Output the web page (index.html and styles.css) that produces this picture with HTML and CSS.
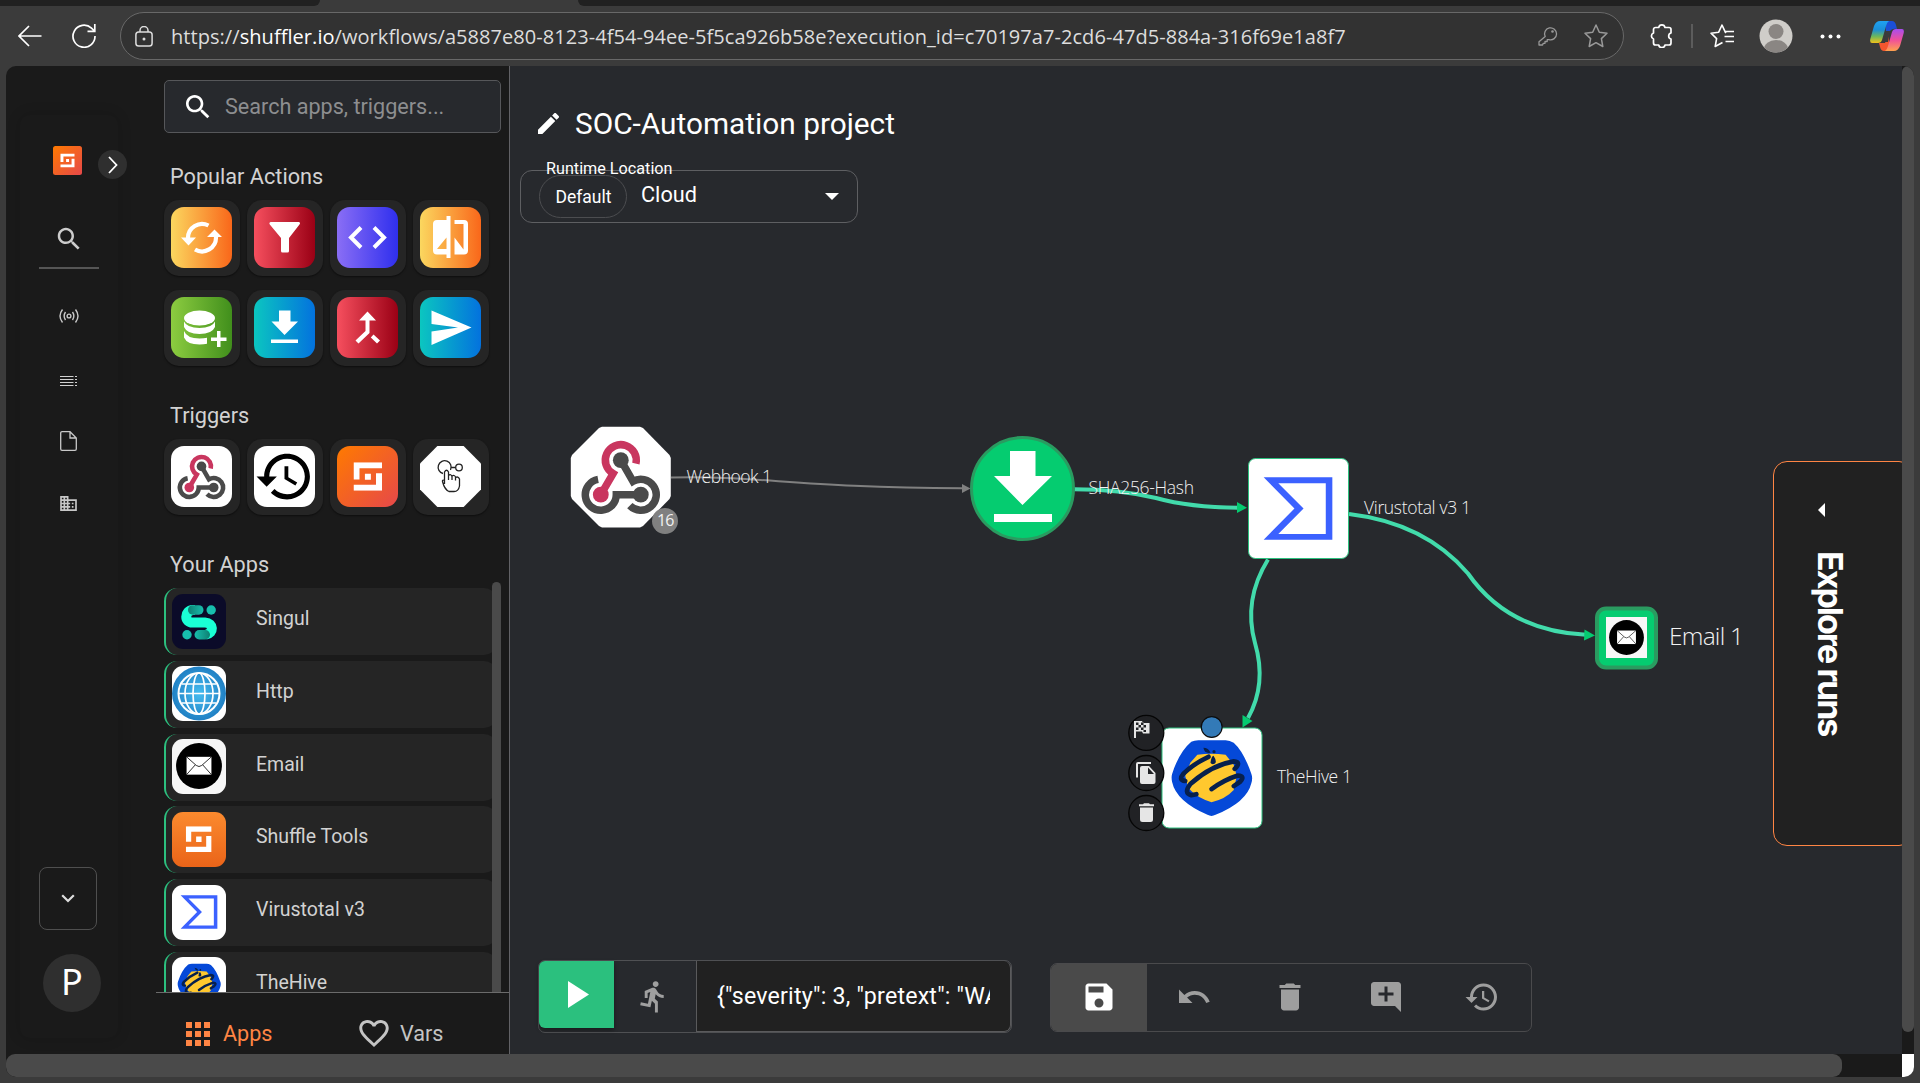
FILE: index.html
```html
<!DOCTYPE html>
<html lang="en">
<head>
<meta charset="utf-8">
<title>Shuffle - SOC-Automation project</title>
<link rel="stylesheet" href="styles.css">
</head>
<body>
<svg class="defs" width="0" height="0" aria-hidden="true">
  <defs>
    <linearGradient id="g-brand" x1="0" y1="0" x2="1" y2="1"><stop offset="0" stop-color="#ff7a00"/><stop offset="1" stop-color="#e6484a"/></linearGradient>
    <linearGradient id="g-tools" x1="0" y1="0" x2="0" y2="1"><stop offset="0" stop-color="#fb8a2e"/><stop offset="1" stop-color="#ea6419"/></linearGradient>
    <radialGradient id="g-http"><stop offset="0" stop-color="#46bdf0"/><stop offset="1" stop-color="#2080c4"/></radialGradient>
    <linearGradient id="g-sing1" x1="0" y1="0" x2="1" y2="0"><stop offset="0" stop-color="#0f7f72"/><stop offset="1" stop-color="#17bfae"/></linearGradient>
    <linearGradient id="g-sing2" x1="0" y1="0" x2="1" y2="0"><stop offset="0" stop-color="#17bfae"/><stop offset="1" stop-color="#0f7f72"/></linearGradient>
    <linearGradient id="g-cop1" x1="0" y1="0" x2="0" y2="1"><stop offset="0" stop-color="#1fa2f2"/><stop offset=".4" stop-color="#1b8fd8"/><stop offset=".7" stop-color="#6cb75c"/><stop offset="1" stop-color="#f2c21a"/></linearGradient>
    <linearGradient id="g-cop2" x1="0" y1="0" x2="0" y2="1"><stop offset="0" stop-color="#a84df0"/><stop offset=".5" stop-color="#f0509a"/><stop offset="1" stop-color="#ffa24d"/></linearGradient>
    <symbol id="shuffle" viewBox="0 0 10 10"><path d="M0 0H10V2.1H2.1V6H0ZM7.9 3.8H10V10H0V7.9H7.9ZM4 4H6.1V6.1H4Z" fill="#fff"/></symbol>
    <symbol id="webhook" viewBox="0 0 100 100">
      <g fill="none" stroke-width="7.5">
        <path d="M65.1 37A15.5 15.5 0 1 0 42.3 46.9L30 68" stroke="#c9365f"/>
        <path d="M27.3 52.7A15.5 15.5 0 1 0 45.5 68H70M59 79A15.5 15.5 0 1 0 62.2 54.6L50 33.5" stroke="#4a4a4a"/>
      </g>
      <circle cx="50" cy="33.5" r="7.9" fill="#4a4a4a"/><circle cx="70" cy="68" r="7.9" fill="#4a4a4a"/><circle cx="30" cy="68" r="7.9" fill="#c9365f"/>
    </symbol>
    <symbol id="hive" viewBox="0 0 100 100">
      <path d="M30 14Q33 12.500 37 12.500H64Q68 12.500 72 15Q82 24 89.500 46Q91 50 89.500 55Q85 74 54 86.500Q50 88.500 46 86.500Q15 73 11 54Q10 49 11 46Q18 24 30 14Z" fill="#0549d8"/>
      <path d="M36 27Q50 25 64 27L72 37L75 48L72 62Q64 71 50 74Q36 70 27 60L24 48L29 35Z" fill="#ffc82e"/>
      <g fill="none" stroke="#07204d" stroke-width="4.600" stroke-linecap="round" stroke-linejoin="round">
        <path d="M47 29Q32 36 22 46Q17 52 24 53"/>
        <path d="M73 41Q80 34 72 33.500Q50 37 29 56Q22 65 30 67L35 66"/>
        <path d="M50 61Q62 52 76 47.500Q84 48 78 54L72 58"/>
      </g>
      <path d="M42 20Q47 20 49 25Q43 26 42 20ZM49 35Q50 28 52 28Q56 34 53 36Q50 37 49 35Z" fill="#07204d"/><circle cx="52.500" cy="24" r="1.600" fill="#07204d"/>
    </symbol>
    <symbol id="envelope" viewBox="0 0 100 100">
      <circle cx="50" cy="50" r="42.500" fill="#000"/><rect x="27" y="33" width="46" height="33" fill="#fff"/>
      <path d="M27 33L45 49Q50 53 55 49L73 33M27 66L43 48M73 66L57 48" fill="none" stroke="#000" stroke-width="1.500"/>
    </symbol>
    <symbol id="vt" viewBox="0 0 100 100"><path fill-rule="evenodd" fill="#3b61ff" d="M16 19H84V81H16L46.500 50ZM30.500 25L55.500 50L30.500 75.200H77.500V25Z"/></symbol>
    <symbol id="search" viewBox="0 0 24 24"><path fill="currentColor" d="M15.500 14h-.79l-.28-.27C15.410 12.590 16 11.110 16 9.500 16 5.910 13.090 3 9.500 3S3 5.910 3 9.500 5.910 16 9.500 16c1.610 0 3.090-.59 4.230-1.570l.27.28v.79l5 4.990L20.490 19l-4.990-5zm-6 0C7.010 14 5 11.990 5 9.500S7.010 5 9.500 5 14 7.010 14 9.500 11.990 14 9.500 14z"/></symbol>
    <symbol id="history" viewBox="0 0 24 24"><path fill="currentColor" d="M13 3c-4.970 0-9 4.030-9 9H1l3.890 3.890.07.14L9 12H6c0-3.870 3.130-7 7-7s7 3.130 7 7-3.130 7-7 7c-1.930 0-3.680-.79-4.940-2.060l-1.420 1.420C8.270 19.990 10.510 21 13 21c4.970 0 9-4.030 9-9s-4.030-9-9-9zm-1 5v5l4.280 2.540.72-1.210-3.500-2.080V8H12z"/></symbol>
    <symbol id="trash" viewBox="0 0 24 24"><path fill="currentColor" d="M6 19c0 1.100.9 2 2 2h8c1.100 0 2-.9 2-2V7H6v12zM19 4h-3.500l-1-1h-5l-1 1H5v2h14V4z"/></symbol>
  </defs>
</svg>

<header class="browser">
  <div class="tabstrip"><span class="tab tab--left"></span><span class="tab tab--right"></span></div>
  <div class="toolbar">
    <svg class="nav-back" viewBox="0 0 24 22"><path d="M23.500 11H1M11 1L1 11L11 21" fill="none" stroke="#fff" stroke-width="1.700"/></svg>
    <svg class="nav-reload" viewBox="0 0 24 24"><path d="M23 12A11 11 0 1 1 19.500 4.200L22.500 7M22.800 0V7.300H15.500" fill="none" stroke="#fff" stroke-width="1.700"/></svg>
    <div class="address">
      <svg class="lock" viewBox="0 0 18 21"><rect x=".9" y="6" width="16.200" height="14" rx="2.800" fill="none" stroke="#ddd" stroke-width="1.500"/><path d="M5 6V4.500a4 4 0 0 1 8 0V6" fill="none" stroke="#ddd" stroke-width="1.500"/><circle cx="9" cy="13" r="1.500" fill="#ddd"/></svg>
      <span class="url">https://<b>shuffler.io</b>/workflows/a5887e80-8123-4f54-94ee-5f5ca926b58e?execution_id=c70197a7-2cd6-47d5-884a-316f69e1a8f7</span>
      <svg class="key" viewBox="0 0 20 20"><path d="M7.200 10.500A6 6 0 1 1 11 13.600L9.200 13.700V15.500H7V17.300H5.200L4.600 19H1V15.700Z" fill="none" stroke="#999" stroke-width="1.300" stroke-linejoin="round"/><circle cx="14.500" cy="5.500" r="1.300" fill="#999"/></svg>
      <svg class="star" viewBox="0 0 24 24"><path d="M12 1L15.300 8.200L23 9.200L17.400 14.600L18.800 22.500L12 18.700L5.200 22.500L6.600 14.600L1 9.200L8.700 8.200Z" fill="none" stroke="#999" stroke-width="1.500" stroke-linejoin="round"/></svg>
    </div>
    <svg class="puzzle" viewBox="0 0 22 24"><path d="M3.500 5.500A2 2 0 0 1 5.500 3.500H8.700A3.200 3.200 0 0 1 15 3.500H19A2 2 0 0 1 21 5.500V9A3.100 3.100 0 0 0 21 15V19A2 2 0 0 1 19 21H15A3.200 3.200 0 0 1 8.700 21H5.500A2 2 0 0 1 3.500 19V15A3.200 3.200 0 0 1 3.500 9Z" fill="none" stroke="#fff" stroke-width="1.700" stroke-linejoin="round"/></svg>
    <span class="sep"></span>
    <svg class="favs" viewBox="0 0 24 24"><path d="M16 9L15.300 8.200L12 1L8.700 8.200L1 9.200L6.600 14.600L5.200 22.500L12.500 18.500M15.500 7.500H24M14.500 12.500H24M15.500 17.500H24" fill="none" stroke="#fff" stroke-width="1.600" stroke-linejoin="round"/></svg>
    <svg class="person" viewBox="0 0 34 34"><clipPath id="pc"><circle cx="17" cy="17" r="16.500"/></clipPath><g clip-path="url(#pc)"><rect width="34" height="34" fill="#cfcdc9"/><circle cx="17" cy="12.500" r="7.500" fill="#8a8683"/><ellipse cx="17" cy="30" rx="12" ry="9" fill="#8a8683"/></g></svg>
    <svg class="dots" viewBox="0 0 21 5"><g fill="#fff"><circle cx="2.500" cy="2.500" r="2"/><circle cx="10.500" cy="2.500" r="2"/><circle cx="18.500" cy="2.500" r="2"/></g></svg>
    <svg class="copilot" viewBox="0 0 34 30">
      <path d="M15 0H22Q25 0 26 4L27 8Q21 7 19 12L17 20Z" fill="#1b4fd6"/>
      <path d="M9 22H15L19 10V26L17 30H14Q11 30 10 26Z" fill="#f2562f"/>
      <path d="M16 10H20L18 21H14Z" fill="#3b3b3b"/>
      <path d="M10 0H19Q17 1 16 5L12 19Q11 22 8 22H2Q-.5 22 .3 18L4 5Q6 0 10 0Z" fill="url(#g-cop1)"/>
      <path d="M24 30H15Q17 29 18 25L22 11Q23 8 26 8H32Q34.500 8 33.700 12L30 25Q28 30 24 30Z" fill="url(#g-cop2)"/>
    </svg>
  </div>
</header>

<main class="page">
  <aside class="rail">
    <div class="rail__card">
      <div class="rail__brand">
        <svg class="brand" viewBox="0 0 29 29"><rect width="29" height="29" rx="2.500" fill="url(#g-brand)"/><use href="#shuffle" x="7" y="7.500" width="15" height="14"/></svg>
        <span class="expand"><svg viewBox="0 0 10 18"><path d="M1 1L8.500 9L1 17" fill="none" stroke="#fff" stroke-width="1.800"/></svg></span>
      </div>
      <svg class="rail__search" viewBox="0 0 24 24"><use href="#search"/></svg>
      <span class="rail__rule"></span>
      <svg class="rail__cast" viewBox="0 0 20 14"><g fill="none" stroke="#c8c8c8" stroke-width="1.400"><circle cx="10" cy="7" r="1.900"/><path d="M6.500 3Q3.800 7 6.500 11M13.500 3Q16.200 7 13.500 11M3.500 .5Q-1.500 7 3.500 13.500M16.500 .5Q21.500 7 16.500 13.500"/></g></svg>
      <svg class="rail__list" viewBox="0 0 17 10"><path d="M0 .5H13.500M0 3.500H13.500M0 6.500H13.500M0 9.500H13.500M15 .5H17M15 3.500H17M15 6.500H17M15 9.500H17" stroke="#d0d0d0" stroke-width="1"/></svg>
      <svg class="rail__file" viewBox="0 0 17 20"><path d="M2 .7H10L16.300 7V18A1.300 1.300 0 0 1 15 19.300H2A1.300 1.300 0 0 1 .7 18V2A1.300 1.300 0 0 1 2 .7ZM10 1V7H16" fill="none" stroke="#c8c8c8" stroke-width="1.300"/></svg>
      <svg class="rail__org" viewBox="2 3 20 18"><path fill="#c8c8c8" d="M12 7V3H2v18h20V7H12zM6 19H4v-2h2v2zm0-4H4v-2h2v2zm0-4H4V9h2v2zm0-4H4V5h2v2zm4 12H8v-2h2v2zm0-4H8v-2h2v2zm0-4H8V9h2v2zm0-4H8V5h2v2zm10 12h-8v-2h2v-2h-2v-2h2v-2h-2V9h8v10zm-2-8h-2v2h2v-2zm0 4h-2v2h2v-2z"/></svg>
      <span class="rail__drop"><svg viewBox="0 0 14 9"><path d="M1.200 1.200L7 7L12.800 1.200" fill="none" stroke="#ddd" stroke-width="2.200"/></svg></span>
      <span class="rail__user">P</span>
    </div>
  </aside>

  <aside class="apps">
    <label class="search"><svg viewBox="0 0 24 24"><use href="#search"/></svg><span>Search apps, triggers...</span></label>

    <h2 class="heading heading--popular">Popular Actions</h2>
    <div class="tiles">
      <span class="tile"><i class="ic ic--yellow"><svg viewBox="0 0 61 61"><g fill="none" stroke="#fff" stroke-width="4.200"><path d="M37.500 18.500A14 14 0 0 0 17 31M24 42.500A14 14 0 0 0 45 30"/></g><path d="M10 30.500H25L17.500 38.500ZM51 30H36L43.500 22.500Z" fill="#fff"/></svg></i></span>
      <span class="tile"><i class="ic ic--red"><svg viewBox="0 0 61 61"><path d="M17 15H44.500Q47 15.500 45.500 17.500L35 31V44Q35 45.500 33.500 45.500H28.500Q27 45.500 27 44V31L15.800 17.500Q14.500 15.500 17 15Z" fill="#fff"/></svg></i></span>
      <span class="tile"><i class="ic ic--blue"><svg viewBox="0 0 61 61"><path d="M24 20.500L14 30.500L24 40.500M37 20.500L47 30.500L37 40.500" fill="none" stroke="#fff" stroke-width="4"/></svg></i></span>
      <span class="tile"><i class="ic ic--yellow"><svg viewBox="0 0 61 61"><path fill-rule="evenodd" d="M26.500 13V9H30.500V51H26.500V47.500H17Q13 47.500 13 43.500V17Q13 13 17 13ZM17 42H26.500V30.500Z" fill="#fff"/><path d="M34.500 13H44Q48 13 48 17V43.500Q48 47.500 44 47.500H34.500V30.500L43.500 42.500V17H34.500Z" fill="#fff"/></svg></i></span>
      <span class="tile"><i class="ic ic--green"><svg viewBox="0 0 61 61"><g fill="#fff"><ellipse cx="28.500" cy="21" rx="15.500" ry="7.500"/><path d="M13 24.500Q16 31 28.500 31Q41 31 44 24.500V30Q41 37 28.500 37Q16 37 13 30ZM13 34Q16 41.500 28.500 41.500Q33 41.500 36 40.800V46.800Q33 47.500 28.500 47.500Q16 47.500 13 40.500ZM46 34H49.500V40.500H55.500V44H49.500V50H46V44H40V40.500H46Z"/></g></svg></i></span>
      <span class="tile"><i class="ic ic--cyan"><svg viewBox="0 0 61 61"><path d="M25 13.500H36.500V24.500H44L30.500 38L17.500 24.500H25ZM17 42.500H44V46H17Z" fill="#fff"/></svg></i></span>
      <span class="tile"><i class="ic ic--red"><svg viewBox="0 0 61 61"><path d="M30.500 14.500L39 23.500H32.500V36L21.500 46.500L18.500 43.500L28.500 34V23.500H22ZM36.500 37.500L43 43.500L40 46.500L33.800 40.500Z" fill="#fff"/></svg></i></span>
      <span class="tile"><i class="ic ic--cyan"><svg viewBox="0 0 61 61"><path d="M11.500 13.500L51.500 30.500L11.500 48V34.500L38 30.500L11.500 27Z" fill="#fff"/></svg></i></span>
    </div>

    <h2 class="heading heading--triggers">Triggers</h2>
    <div class="tiles">
      <span class="tile"><i class="ic ic--white"><svg viewBox="0 0 100 100"><use href="#webhook"/></svg></i></span>
      <span class="tile"><i class="ic ic--white"><svg viewBox="1 0 24 24" class="black"><use href="#history" x="1" y="0" width="24" height="24"/></svg></i></span>
      <span class="tile"><i class="ic"><svg viewBox="0 0 61 61"><rect width="61" height="61" fill="url(#g-brand)"/><use href="#shuffle" x="16.500" y="16.300" width="28.500" height="28.500"/></svg></i></span>
      <span class="tile"><i class="ic ic--oct"><svg viewBox="0 0 61 61"><g fill="none" stroke="#222" stroke-width="1.300"><path d="M23 27.500A6.500 6.500 0 1 1 30.500 24M31 21.500H35.500"/><circle cx="39" cy="21.500" r="3.300"/><path d="M24.500 38V26Q26.500 22.500 28.500 26V34V29.500Q31 27.500 32 30.500V34V30Q34.500 28.500 35.500 31V34.500V31.500Q38 30 39.500 33V40Q38.500 45.500 34 45.500H29Q24.500 43.500 22.500 35.500Q22 33.500 24.500 34.500" fill="#fff"/></g></svg></i></span>
    </div>

    <h2 class="heading heading--yours">Your Apps</h2>
    <div class="list">
      <div class="list__rows">
        <div class="row"><svg class="row__ic" viewBox="0 0 54 55"><rect width="54" height="55" fill="#0b0b29"/><path d="M23 16H21C12 16.500 12 29 21 28.500H33C42 29 42 39.500 34 40.500" fill="none" stroke="#1affd5" stroke-width="10"/><rect x="16" y="11.200" width="15.500" height="9.500" rx="4.700" fill="url(#g-sing1)"/><rect x="22.500" y="36" width="15.500" height="9.500" rx="4.700" fill="url(#g-sing2)"/><circle cx="39.200" cy="16" r="4.700" fill="#17bfae"/><circle cx="15" cy="40.700" r="4.700" fill="#17bfae"/></svg><span>Singul</span></div>
        <div class="row"><svg class="row__ic" viewBox="0 0 54 55"><rect width="54" height="55" fill="#fff"/><circle cx="27" cy="27.500" r="27" fill="url(#g-http)"/><g fill="none" stroke="#fff" stroke-width="1.700"><circle cx="27" cy="27.500" r="20.500" stroke-width="2"/><ellipse cx="27" cy="27.500" rx="6" ry="20.500"/><ellipse cx="27" cy="27.500" rx="14" ry="20.500"/><path d="M6.500 27.500H47.500M10 18H44M10 37H44"/></g></svg><span>Http</span></div>
        <div class="row"><svg class="row__ic" viewBox="0 0 54 55"><rect width="54" height="55" fill="#f7f7f7"/><use href="#envelope" width="54" height="54"/></svg><span>Email</span></div>
        <div class="row"><svg class="row__ic" viewBox="0 0 54 55"><rect width="54" height="55" fill="url(#g-tools)"/><use href="#shuffle" x="13.800" y="14.300" width="25.800" height="25.800"/></svg><span>Shuffle Tools</span></div>
        <div class="row"><svg class="row__ic" viewBox="0 0 54 55"><rect width="54" height="55" fill="#fff"/><use href="#vt" width="54" height="54"/></svg><span>Virustotal v3</span></div>
        <div class="row"><svg class="row__ic" viewBox="0 0 54 55"><rect width="54" height="55" fill="#fff"/><use href="#hive" width="54" height="54"/></svg><span>TheHive</span></div>
      </div>
      <span class="list__bar"></span>
    </div>

    <nav class="modes">
      <span class="mode mode--on"><svg viewBox="0 0 24 24"><path fill="currentColor" d="M0 0h6v6H0zM9 0h6v6H9zM18 0h6v6h-6zM0 9h6v6H0zM9 9h6v6H9zM18 9h6v6h-6zM0 18h6v6H0zM9 18h6v6H9zM18 18h6v6h-6z"/></svg>Apps</span>
      <span class="mode mode--vars"><svg viewBox="2 3 20 18.350"><path fill="currentColor" d="M16.500 3c-1.740 0-3.410.81-4.500 2.090C10.910 3.810 9.240 3 7.500 3 4.420 3 2 5.420 2 8.500c0 3.780 3.400 6.860 8.550 11.540L12 21.350l1.450-1.320C18.600 15.360 22 12.280 22 8.500 22 5.420 19.580 3 16.500 3zm-4.400 15.550l-.1.100-.1-.1C7.140 14.240 4 11.390 4 8.500 4 6.500 5.500 5 7.500 5c1.540 0 3.040.99 3.570 2.360h1.870C13.460 5.990 14.960 5 16.500 5c2 0 3.500 1.500 3.500 3.500 0 2.890-3.140 5.740-7.900 10.050z"/></svg>Vars</span>
    </nav>
  </aside>

  <section class="canvas">
    <svg class="graph" viewBox="510 66 1392 988">
      <g fill="none" stroke="#42dbab" stroke-width="4">
        <path d="M671 477.500C755 475 800 488 962 488.300" stroke="#808080" stroke-width="2"/>
        <path d="M1074 489.300Q1120 489.500 1156 498Q1190 507.500 1238 507.700"/>
        <path d="M1349 514Q1425 523 1468 573.500Q1508 631 1586 634.800"/>
        <path d="M1268 559.500Q1243 600 1255 643Q1267 684 1248 718"/>
      </g>
      <path d="M962 484V493L970.500 488.500Z" fill="#808080"/>
      <g fill="#05cb70"><path d="M1237 502V513L1247 507.800Z"/><path d="M1584.500 629.500L1595 635.500L1584 640.500Z"/><path d="M1242.500 715V727.500L1252.500 721Z"/></g>

      <path d="M602 426.700H640L643 428L669.500 455L670.800 458V496L669.500 499L643 526L640 527.500H602L599 526L572 499L570.800 496V458L572 455L599 428Z" fill="#fff"/>
      <use href="#webhook" x="570.800" y="426.700" width="100" height="100"/>
      <circle cx="665" cy="521" r="13" fill="#808080"/>
      <circle cx="1022.500" cy="488.500" r="51" fill="#05cc70" stroke="#2a9b60" stroke-width="3"/>
      <path d="M1010 451H1035.500V476H1052L1022.500 505L994 476H1010ZM994 514H1052V522H994Z" fill="#fff"/>
      <rect x="1248.500" y="458.500" width="100" height="100" rx="7" fill="#fff" stroke="#2cc07f"/>
      <use href="#vt" x="1247.500" y="458" width="101" height="101"/>
      <rect x="1597" y="608.500" width="59" height="59" rx="9" fill="#05cc70" stroke="#2a9b60" stroke-width="4"/>
      <rect x="1606" y="617" width="41" height="41" fill="#f7f7f7"/><use href="#envelope" x="1606" y="617" width="41" height="41"/>
      <rect x="1162" y="728" width="100" height="100" rx="7" fill="#fff" stroke="#2cc07f"/>
      <use href="#hive" x="1161" y="727.500" width="101" height="101"/>
      <circle cx="1211.700" cy="727" r="10.400" fill="#337ab7" stroke="#0c0c0c" stroke-width="1.200"/>
      <g fill="#212225" stroke="#050505" stroke-width="1.300"><circle cx="1146.300" cy="732.800" r="17.500"/><circle cx="1146.300" cy="773" r="17.500"/><circle cx="1146.300" cy="813" r="17.500"/></g>
      <path fill-rule="evenodd" fill="#e6e6e6" d="M1134 721H1142L1143 723H1149.500V733.500H1143L1142 731.500H1136V738H1134ZM1136 722.500V725H1138.500V722.500ZM1141 722.500V725H1138.500V727.500H1136V730H1138.500V727.500H1141V730H1143.500V727.500H1146V725H1143.500V727.500H1141V725H1143.500V722.500ZM1143.500 730V732H1146V730Z"/>
      <path fill="#e6e6e6" fill-rule="evenodd" d="M1136 777.500V764Q1136 762 1138 762H1151V764H1138V777.500ZM1142 766H1149L1155.500 773V782Q1155.500 784 1153.500 784H1142Q1140 784 1140 782V768Q1140 766 1142 766ZM1148 767.500V774H1154Z"/>
      <path fill="#e6e6e6" d="M1140 807.500H1153V819.500Q1153 822 1150.500 822H1142.500Q1140 822 1140 819.500ZM1139 804.200H1143L1144 803.200H1149L1150 804.200H1154V806.200H1139Z"/>
      <g class="labels">
        <text x="686.500" y="482.500" textLength="85.500">Webhook 1</text>
        <text x="657" y="526" class="count">16</text>
        <text x="1088.500" y="494" textLength="105.500">SHA256-Hash</text>
        <text x="1364" y="513.500" textLength="107">Virustotal v3 1</text>
        <text x="1277" y="782.500" textLength="75">TheHive 1</text>
        <text x="1669" y="644.500" textLength="75" class="big">Email 1</text>
      </g>
    </svg>

    <div class="top">
      <h1 class="title"><svg viewBox="3 3 18 18"><path fill="#fff" d="M3 17.250V21h3.750L17.810 9.940l-3.750-3.750L3 17.250zM20.710 7.040c.39-.39.39-1.020 0-1.410l-2.340-2.340c-.39-.39-1.020-.39-1.410 0l-1.830 1.830 3.750 3.750 1.830-1.830z"/></svg><span>SOC-Automation project</span></h1>
      <div class="runtime">
        <span class="runtime__label">Runtime Location</span>
        <span class="pill">Default</span>
        <span class="runtime__value">Cloud</span>
        <svg class="caret" viewBox="0 0 14 7"><path d="M0 0H14L7 7Z" fill="#fff"/></svg>
      </div>
    </div>

    <div class="bottom">
      <div class="run">
        <span class="run__play"><svg viewBox="0 0 21 27"><path d="M0 0L21 13.500L0 27Z" fill="#fff"/></svg></span>
        <span class="run__person"><svg viewBox="0 0 24 24"><path fill="#a0a0a0" d="M13.490 5.480c1.100 0 2-.9 2-2s-.9-2-2-2-2 .9-2 2 .9 2 2 2zm-3.600 13.900l1-4.400 2.100 2v6h2v-7.500l-2.100-2 .6-3c1.300 1.500 3.300 2.500 5.500 2.500v-2c-1.900 0-3.500-1-4.300-2.400l-1-1.600c-.4-.6-1-1-1.700-1-.3 0-.5.1-.8.1l-5.200 2.200v4.700h2v-3.400l1.800-.7-1.600 8.100-4.900-1-.4 2 7 1.400z"/></svg></span>
        <span class="run__input"><span>{"severity": 3, "pretext": "WA</span></span>
      </div>
      <div class="tools">
        <span class="tool tool--save"><svg viewBox="0 0 24 24"><path fill="currentColor" d="M17 3H5c-1.110 0-2 .9-2 2v14c0 1.100.89 2 2 2h14c1.100 0 2-.9 2-2V7l-4-4zm-5 16c-1.660 0-3-1.340-3-3s1.340-3 3-3 3 1.340 3 3-1.340 3-3 3zm3-10H5V5h10v4z"/></svg></span>
        <span class="tool"><svg viewBox="0 0 24 24"><path fill="currentColor" d="M12.500 8c-2.650 0-5.050.99-6.900 2.600L2 7v9h9l-3.620-3.620c1.390-1.160 3.160-1.880 5.120-1.880 3.540 0 6.550 2.310 7.600 5.500l2.370-.78C21.080 11.030 17.150 8 12.500 8z"/></svg></span>
        <span class="tool"><svg viewBox="0 0 24 24"><use href="#trash"/></svg></span>
        <span class="tool"><svg viewBox="0 0 24 24"><path fill="currentColor" d="M22 4c0-1.100-.9-2-2-2H4c-1.100 0-2 .9-2 2v12c0 1.100.9 2 2 2h14l4 4V4zm-5 7h-4v4h-2v-4H7V9h4V5h2v4h4v2z"/></svg></span>
        <span class="tool"><svg viewBox="0 0 24 24"><use href="#history"/></svg></span>
      </div>
    </div>

    <div class="explore"><svg viewBox="0 0 7 14"><path d="M7 0V14L0 7Z" fill="#fff"/></svg><span>Explore runs</span></div>
  </section>

  <div class="vscroll"><span></span></div>
  <div class="hscroll"><span></span></div>
  <div class="corner"></div>
</main>
</body>
</html>
```
FILE: styles.css
```css
* { box-sizing: border-box; }
body { margin: 0; width: 1920px; height: 1083px; overflow: hidden; background: #3b3b3b; font-family: Roboto, sans-serif; color: #fff; display: flex; flex-direction: column; }
svg { display: block; flex: none; }
.defs { position: absolute; }
h1, h2 { margin: 0; font-weight: 400; }

/* browser chrome */
.browser { flex: none; height: 66px; display: flex; flex-direction: column; }
.tabstrip { height: 6px; display: flex; justify-content: space-between; }
.tab { background: #212121; height: 6px; }
.tab--left { width: 320px; border-bottom-right-radius: 6px; }
.tab--right { width: 1342px; border-bottom-left-radius: 6px; }
.toolbar { height: 60px; display: flex; align-items: center; padding: 0 16px 0 18px; }
.nav-back { width: 24px; height: 22px; margin-right: 30px; }
.nav-reload { width: 24px; height: 24px; margin-right: 24px; }
.address { width: 1504px; height: 48px; border: 1.500px solid #686868; border-radius: 24px; background: #323232; display: flex; align-items: center; padding: 0 15px 0 14px; margin-right: 26px; }
.lock { width: 18px; height: 21px; margin-right: 18px; }
.url { font: 20px/28px "Open Sans", sans-serif; color: #ddd; white-space: nowrap; flex: 1; letter-spacing: 0.055px; padding-top: 1px; }
.url b { font-weight: 400; color: #fff; }
.key { width: 20px; height: 20px; margin-right: 26px; }
.star { width: 24px; height: 24px; }
.puzzle { width: 22px; height: 24px; margin-right: 19px; }
.sep { width: 1.500px; height: 24px; background: #5c5c5c; margin-right: 17px; }
.favs { width: 24px; height: 24px; margin-right: 25px; }
.person { width: 34px; height: 34px; margin-right: 27px; }
.dots { width: 21px; height: 5px; margin-right: 29px; }
.copilot { width: 34px; height: 30px; }

/* viewport */
.page { margin-left: 6px; width: 1908px; height: 1011px; border-radius: 10px; overflow: hidden; background: #1a1a1a; display: grid; grid-template-columns: 150px 354px 1392px 12px; grid-template-rows: 988px 23px; }

/* icon rail */
.rail { padding: 49px 0 0 14px; }
.rail__card { width: 98px; height: 923px; border-radius: 10px; box-shadow: 0 0 14px rgba(0, 0, 0, .16); display: flex; flex-direction: column; align-items: center; padding-top: 31px; }
.rail__brand { display: flex; align-self: flex-start; padding-left: 33px; height: 33px; align-items: flex-start; }
.brand { width: 29px; height: 29px; }
.expand { width: 29px; height: 29px; border-radius: 50%; background: #2f2f2f; margin: 4px 0 0 16px; flex: none; display: flex; align-items: center; justify-content: center; padding-left: 1px; }
.expand svg { width: 10px; height: 18px; }
.rail__search { width: 30px; height: 30px; color: #ccc; margin-top: 45px; }
.rail__rule { width: 60px; height: 2px; background: #555; margin-top: 13px; }
.rail__cast { width: 20px; height: 14px; margin-top: 40px; }
.rail__list { width: 17px; height: 10px; margin-top: 53px; margin-right: 1px; }
.rail__file { width: 17px; height: 20px; margin-top: 45px; margin-right: 1px; }
.rail__org { width: 17px; height: 15px; margin-top: 45px; margin-right: 1px; }
.rail__drop { width: 58px; height: 63px; border: 1px solid #4f4f4f; border-radius: 8px; margin-top: auto; margin-right: 2px; display: flex; align-items: center; justify-content: center; }
.rail__drop svg { width: 14px; height: 9px; }
.rail__user { width: 58px; height: 58px; border-radius: 50%; background: #2f2f2f; margin: 24px 0 26px 6px; display: flex; align-items: center; justify-content: center; font: 36px/58px "Noto Sans", sans-serif; padding-bottom: 2px; }

/* app drawer */
.apps { border-right: 1px solid #626266; display: flex; flex-direction: column; padding: 14px 0 0 8px; min-width: 0; }
.search { width: 337px; height: 53px; border: 1px solid #56575a; border-radius: 5px; background: #27292d; display: flex; align-items: center; color: #8d8e90; font-size: 21.600px; }
.search svg { width: 32px; height: 32px; color: #fff; margin: 0 11px 0 17px; }
.heading { color: #d2d2d2; font-size: 21.700px; line-height: 26px; height: 26px; padding-left: 6px; }
.heading--popular { margin-top: 31px; }
.heading--triggers { margin-top: 37px; }
.heading--yours { margin-top: 37px; }
.tiles { display: grid; grid-template-columns: repeat(4, 76px); column-gap: 7px; row-gap: 14px; margin-top: 10px; }
.tile { height: 76px; border-radius: 15px; background: #252525; box-shadow: 0 1px 2px rgba(0, 0, 0, .5); padding: 7px 0 0 7px; }
.ic { width: 61px; height: 61px; border-radius: 13px; overflow: hidden; display: block; }
.ic svg { width: 61px; height: 61px; }
.ic--yellow { background: linear-gradient(90deg, #fbd75f, #f9671a); }
.ic--red { background: linear-gradient(90deg, #f64f5e, #9a0015); }
.ic--blue { background: linear-gradient(90deg, #8a6ef5, #2f2fee); }
.ic--green { background: linear-gradient(90deg, #8ccc40, #418f1c); }
.ic--cyan { background: linear-gradient(90deg, #0bc6c0, #0372de); }
.ic--white { background: #fff; }
.ic--oct { background: #fff; border-radius: 0; clip-path: polygon(28.500% 0, 71.500% 0, 100% 28.500%, 100% 71.500%, 71.500% 100%, 28.500% 100%, 0 71.500%, 0 28.500%); }
.black { color: #000; }
.list { height: 410px; margin-top: 4px; display: flex; overflow: hidden; }
.list__rows { width: 328px; padding-top: 6px; display: flex; flex-direction: column; gap: 5.750px; overflow: hidden; flex: none; }
.row { height: 67px; flex: none; width: 333px; border-left: 2px solid #2cc07f; border-radius: 13px; background: #252525; display: flex; align-items: center; padding: 0 0 1px 6px; font-size: 19.500px; color: #d2d2d2; }
.row__ic { width: 54px; height: 55px; border-radius: 11px; margin-right: 30px; }
.row span { padding-bottom: 5px; }
.list__bar { width: 9px; background: #4a4a4a; border-radius: 5px 5px 0 0; }
.modes { flex: 1; margin-left: -8px; border-top: 1px solid #6b6b6b; display: flex; align-items: center; padding: 20px 0 0 30px; font-size: 21.600px; }
.mode { display: flex; align-items: center; color: #c4c4c4; }
.mode--on { color: #ff8544; gap: 13px; width: 173px; }
.mode--on svg { width: 24px; height: 24px; }
.mode--vars { gap: 11px; }
.mode--vars svg { width: 30px; height: 27px; }

/* workflow canvas */
.canvas { position: relative; background: #27292d; display: flex; flex-direction: column; justify-content: space-between; overflow: hidden; }
.graph { position: absolute; inset: 0; width: 1392px; height: 988px; }
.labels { font: 300 17.500px "Open Sans", sans-serif; fill: #f2f2f2; }
.labels .big { font-size: 24.500px; }
.labels .count { font-size: 16px; font-weight: 400; letter-spacing: -1px; }
.top { position: relative; padding: 41px 0 0 10px; }
.title { display: flex; align-items: center; height: 34px; font-size: 29.800px; padding: 0 0 1px 18px; }
.title svg { width: 21px; height: 21px; margin: 0 16px 0 0; }
.runtime { position: relative; width: 338px; height: 53px; margin-top: 29px; border: 1px solid #5e5f62; border-radius: 12px; display: flex; align-items: center; padding: 0 18px 0 18px; }
.runtime__label { position: absolute; left: 25px; top: -12px; font-size: 16.200px; line-height: 20px; }
.pill { width: 88px; height: 43px; border: 1px solid #4c4d50; border-radius: 22px; display: flex; align-items: center; justify-content: center; font-size: 17.500px; padding-left: 1px; }
.runtime__value { font-size: 21.700px; margin-left: 14px; flex: 1; padding-bottom: 5px; }
.caret { width: 14px; height: 7px; }

.bottom { position: relative; display: flex; align-items: flex-start; padding: 0 0 21px 28px; }
.run { display: flex; width: 474px; height: 73px; border: 1px solid #4f5053; border-radius: 7px; }
.run__play { width: 75px; height: 67px; background: #2bc07e; border-radius: 6px 0 0 6px; display: flex; align-items: center; justify-content: center; box-shadow: 0 2px 4px rgba(0, 0, 0, .4); }
.run__play svg { width: 21px; height: 27px; margin-left: 4px; }
.run__person { width: 82px; display: flex; align-items: center; justify-content: center; padding-right: 3px; }
.run__person svg { width: 35px; height: 35px; }
.run__input { flex: 1; height: 71px; border: 1px solid #5a5a5c; border-width: 0 1px 1px; border-radius: 0 7px 7px 0; background: #212121; padding: 0 19px 0 20px; display: flex; align-items: center; }
.run__input span { overflow: hidden; white-space: nowrap; width: 273px; font-size: 23.200px; letter-spacing: .2px; }
.tools { margin: 3px 0 0 38px; width: 482px; height: 69px; border: 1px solid #4a4a4c; border-radius: 7px; display: flex; overflow: hidden; }
.tool { width: 96px; display: flex; align-items: center; justify-content: center; color: #9e9e9e; padding: 0 2px 2px 0; }
.tool svg { width: 36px; height: 36px; }
.tool--save { background: #4a4a4a; color: #fff; padding-right: 1px; }

.explore { position: absolute; left: 1263px; top: 395px; width: 140px; height: 385px; border: 1px solid #ff8544; border-radius: 14px; background: #212121; display: flex; flex-direction: column; align-items: flex-start; padding-top: 41px; }
.explore svg { width: 7px; height: 14px; margin-left: 44px; }
.explore span { writing-mode: vertical-rl; white-space: nowrap; font: 700 34px/40px Inter, sans-serif; margin: 34px 0 0 36px; letter-spacing: -2px; }

/* page scrollbars */
.vscroll span { display: block; height: 966px; background: #4a4a4a; border-radius: 6px; }
.hscroll { grid-column: 1 / 4; }
.hscroll span { display: block; width: 1836px; height: 23px; background: #4a4a4a; border-radius: 9px; }
.corner { background: #fff; }
```
